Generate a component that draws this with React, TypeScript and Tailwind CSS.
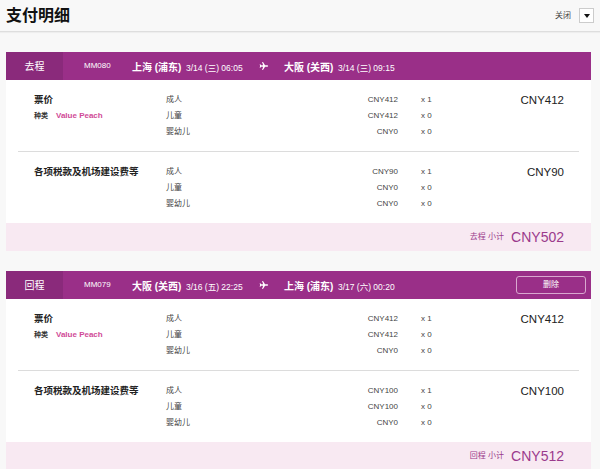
import React from 'react';

type Line = { label: string; price: string; qty: string };
type Item = { title: string; fare?: boolean; lines: Line[]; total: string };
type Leg = {
  dir: string;
  flight: string;
  fromCity: string;
  fromTime: string;
  toCity: string;
  toTime: string;
  removable?: boolean;
  items: Item[];
  subtotal: string;
};

const legs: Leg[] = [
  {
    dir: '去程',
    flight: 'MM080',
    fromCity: '上海 (浦东)',
    fromTime: '3/14 (三) 06:05',
    toCity: '大阪 (关西)',
    toTime: '3/14 (三) 09:15',
    items: [
      {
        title: '票价',
        fare: true,
        lines: [
          { label: '成人', price: 'CNY412', qty: 'x 1' },
          { label: '儿童', price: 'CNY412', qty: 'x 0' },
          { label: '婴幼儿', price: 'CNY0', qty: 'x 0' },
        ],
        total: 'CNY412',
      },
      {
        title: '各项税款及机场建设费等',
        lines: [
          { label: '成人', price: 'CNY90', qty: 'x 1' },
          { label: '儿童', price: 'CNY0', qty: 'x 0' },
          { label: '婴幼儿', price: 'CNY0', qty: 'x 0' },
        ],
        total: 'CNY90',
      },
    ],
    subtotal: 'CNY502',
  },
  {
    dir: '回程',
    flight: 'MM079',
    fromCity: '大阪 (关西)',
    fromTime: '3/16 (五) 22:25',
    toCity: '上海 (浦东)',
    toTime: '3/17 (六) 00:20',
    removable: true,
    items: [
      {
        title: '票价',
        fare: true,
        lines: [
          { label: '成人', price: 'CNY412', qty: 'x 1' },
          { label: '儿童', price: 'CNY412', qty: 'x 0' },
          { label: '婴幼儿', price: 'CNY0', qty: 'x 0' },
        ],
        total: 'CNY412',
      },
      {
        title: '各项税款及机场建设费等',
        lines: [
          { label: '成人', price: 'CNY100', qty: 'x 1' },
          { label: '儿童', price: 'CNY100', qty: 'x 0' },
          { label: '婴幼儿', price: 'CNY0', qty: 'x 0' },
        ],
        total: 'CNY100',
      },
    ],
    subtotal: 'CNY512',
  },
];

function PlaneIcon() {
  return (
    <svg width="10" height="10" viewBox="0 0 24 24" className="shrink-0">
      <path
        d="M22 12c0-1-1-1.6-2.2-1.6H14.5L9.6 2.5H7.4l2.5 7.9H5L3.2 8H1.6l1.1 4-1.1 4h1.6L5 13.6h4.9l-2.5 7.9h2.2l4.9-7.9h5.3C21 13.6 22 13 22 12z"
        fill="white"
      />
    </svg>
  );
}

function LegCard({ leg }: { leg: Leg }) {
  return (
    <div className="bg-white">
      <div className="flex items-center h-[28px] bg-[#9a2f88] text-white">
        <div className="w-[57px] h-full flex items-center justify-center bg-[#8a2a7b] text-[10px]">
          {leg.dir}
        </div>
        <div className="ml-[21px] w-[48px] text-[8px]">{leg.flight}</div>
        <div className="w-[127px] whitespace-nowrap">
          <span className="text-[10px] font-bold">{leg.fromCity}</span>{' '}
          <span className="text-[8.5px]">{leg.fromTime}</span>
        </div>
        <PlaneIcon />
        <div className="ml-[15px] whitespace-nowrap">
          <span className="text-[10px] font-bold">{leg.toCity}</span>{' '}
          <span className="text-[8.5px]">{leg.toTime}</span>
        </div>
        {leg.removable && (
          <button className="ml-auto mr-[5px] w-[70px] h-[18px] border border-[#d9a8cf] rounded-[3px] text-[8px] text-white">
            删除
          </button>
        )}
      </div>
      <div className="px-[12px]">
        {leg.items.map((item, i) => (
          <div
            key={i}
            className={`flex pl-[16px] pr-[15px] pt-[12px] pb-[11px] ${i > 0 ? 'border-t border-[#dcdcdc]' : ''}`}
          >
            <div className="w-[132px]">
              <div className="text-[9.5px] leading-[16px] font-bold text-[#222]">{item.title}</div>
              {item.fare && (
                <div className="flex items-center text-[7px] leading-[16px] font-bold">
                  <span className="text-[#333]">种类</span>
                  <span className="ml-[8px] text-[8px] text-[#d04a97]">Value Peach</span>
                </div>
              )}
            </div>
            <div className="w-[80px] text-[8px] text-[#444]">
              {item.lines.map((l, j) => (
                <div key={j} className="leading-[16px]">{l.label}</div>
              ))}
            </div>
            <div className="w-[152px] text-[8px] text-[#444] text-right">
              {item.lines.map((l, j) => (
                <div key={j} className="leading-[16px]">{l.price}</div>
              ))}
            </div>
            <div className="pl-[23px] text-[8px] text-[#444]">
              {item.lines.map((l, j) => (
                <div key={j} className="leading-[16px]">{l.qty}</div>
              ))}
            </div>
            <div className="flex-1 text-right text-[11.5px] leading-[16px] text-[#222]">
              {item.total}
            </div>
          </div>
        ))}
      </div>
      <div className="h-[28px] bg-[#f8e9f2] flex items-center justify-end pr-[27px] text-[#9b3a8c]">
        <span className="text-[8px]">{leg.dir} 小计</span>
        <span className="ml-[7px] text-[14px]">{leg.subtotal}</span>
      </div>
    </div>
  );
}

export default function App() {
  return (
    <div
      className="w-[600px] h-[469px] overflow-hidden bg-[#f8f8f8]"
      style={{ fontFamily: '"Liberation Sans", "Noto Sans CJK SC", sans-serif' }}
    >
      <div className="h-[32px] flex items-center px-[6px] border-b border-[#dedede] shadow-[0_1px_1px_rgba(0,0,0,0.04)]">
        <h1 className="text-[16px] font-bold text-[#111]">支付明细</h1>
        <span className="ml-auto text-[8px] text-[#444]">关闭</span>
        <button className="ml-[8px] w-[15px] h-[15px] bg-white border border-[#ccc] flex items-center justify-center">
          <span className="w-0 h-0 border-l-[3px] border-r-[3px] border-t-[4px] border-l-transparent border-r-transparent border-t-[#111]" />
        </button>
      </div>
      <div className="pl-[6px] pr-[9px] pt-[20px] flex flex-col gap-[20px]">
        {legs.map((leg, i) => (
          <LegCard key={i} leg={leg} />
        ))}
      </div>
    </div>
  );
}
